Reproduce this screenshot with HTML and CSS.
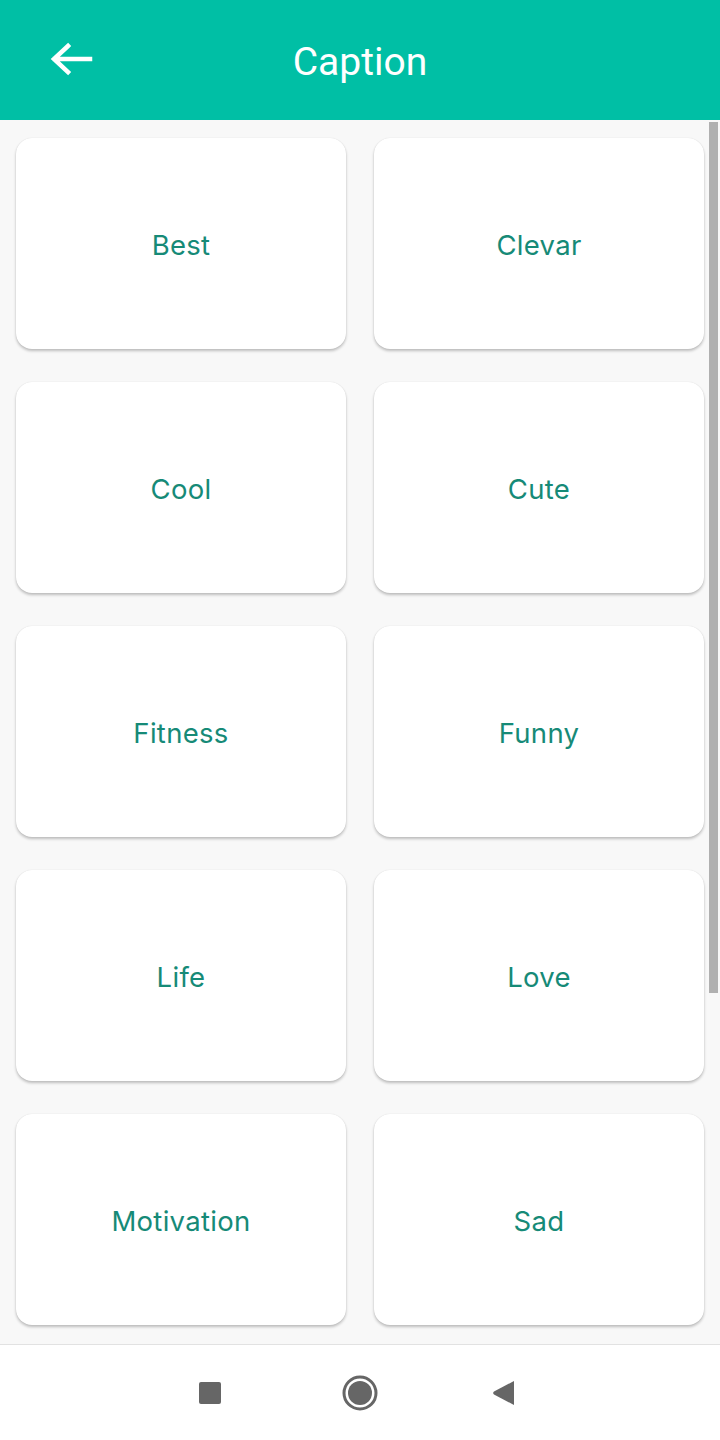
FILE: index.html
```html
<!DOCTYPE html>
<html lang="en">
<head>
    <meta charset="UTF-8">
    <meta name="viewport" content="width=device-width, initial-scale=1.0">
    <title>Caption</title>
    <link rel="stylesheet" href="styles.css">
</head>
<body>
    <div class="screen">
        <header class="toolbar">
            <svg class="back" width="44" height="34" viewBox="0 0 44 34">
                <path d="M41 17H6M19 4L5 17l14 13" fill="none" stroke="#fff" stroke-width="4.5" stroke-linecap="square"/>
            </svg>
            <h1>Caption</h1>
        </header>
        <main class="content">
            <div class="grid">
                <div class="card">Best</div>
                <div class="card">Clevar</div>
                <div class="card">Cool</div>
                <div class="card">Cute</div>
                <div class="card">Fitness</div>
                <div class="card">Funny</div>
                <div class="card">Life</div>
                <div class="card">Love</div>
                <div class="card">Motivation</div>
                <div class="card">Sad</div>
            </div>
            <div class="scrollbar"></div>
        </main>
        <nav class="navbar">
            <svg class="nav-recent" width="24" height="24" viewBox="0 0 24 24"><rect x="1" y="1" width="22" height="22" rx="2" fill="#666"/></svg>
            <svg width="36" height="36" viewBox="0 0 36 36"><circle cx="18" cy="18" r="16" fill="none" stroke="#666" stroke-width="3"/><circle cx="18" cy="18" r="12" fill="#666"/></svg>
            <svg class="nav-back" width="24" height="26" viewBox="0 0 24 26"><path d="M22 1v24L2 14.5a2 2 0 0 1 0-3z" fill="#666"/></svg>
        </nav>
    </div>
</body>
</html>
```

FILE: styles.css
```css
html, body {
    margin: 0;
    padding: 0;
}
body {
    background-color: #f8f8f8;
    font-family: Inter, "Noto Sans", sans-serif;
}
.screen {
    width: 720px;
    height: 1440px;
    display: flex;
    flex-direction: column;
    overflow: hidden;
}
.toolbar {
    height: 120px;
    flex: none;
    background-color: #00bfa5;
    display: flex;
    align-items: center;
    position: relative;
}
.toolbar .back {
    margin-left: 49px;
    margin-top: -2px;
}
.toolbar h1 {
    position: absolute;
    left: 0;
    right: 0;
    margin: 0;
    text-align: center;
    color: white;
    font-family: Roboto, sans-serif;
    font-weight: 400;
    font-size: 39px;
    margin-top: 3px;
}
.content {
    flex: 1;
    position: relative;
    overflow: hidden;
}
.grid {
    display: grid;
    grid-template-columns: 330px 330px;
    grid-auto-rows: 211px;
    column-gap: 28px;
    row-gap: 33px;
    padding: 18px 16px;
}
.card {
    background-color: white;
    border-radius: 16px;
    box-shadow: 0 2px 3px rgba(0, 0, 0, 0.24), 0 0 1px rgba(0, 0, 0, 0.12);
    display: flex;
    align-items: center;
    justify-content: center;
    padding-top: 2px;
    color: #168a77;
    font-size: 27.5px;
    letter-spacing: 0.3px;
}
.scrollbar {
    position: absolute;
    top: 2px;
    right: 2px;
    width: 9px;
    height: 871px;
    background-color: #b0b0b0;
}
.navbar {
    height: 95px;
    flex: none;
    background-color: white;
    border-top: 1px solid #e2e2e2;
    display: flex;
    align-items: center;
    padding-left: 198px;
}
.nav-recent {
    margin-right: 120px;
}
.nav-back {
    margin-left: 114px;
}
```
